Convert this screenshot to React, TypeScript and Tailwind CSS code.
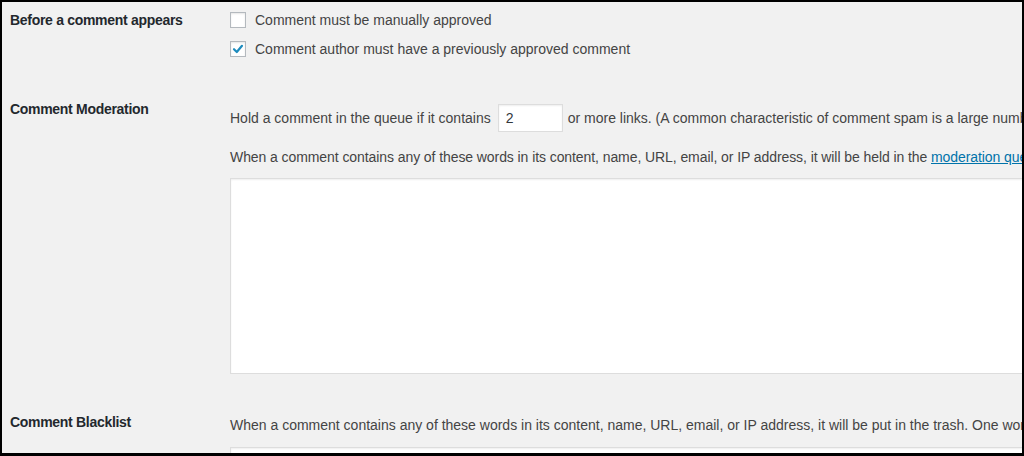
import React from "react";

const font = { fontFamily: '"Liberation Sans", Arial, sans-serif' };

function Checkbox({ checked }: { checked?: boolean }) {
  return (
    <span className="inline-flex h-[16px] w-[16px] shrink-0 items-center justify-center border border-[#b4b9be] bg-white shadow-[inset_0_1px_2px_rgba(0,0,0,0.1)]">
      {checked && (
        <svg width="14" height="14" viewBox="0 0 14 14">
          <path d="M3 7.2 L5.8 10 L11 3.8" fill="none" stroke="#1e8cbe" strokeWidth="2.2" strokeLinecap="round" strokeLinejoin="round" />
        </svg>
      )}
    </span>
  );
}

export default function App() {
  return (
    <div className="h-[456px] w-[1024px] bg-black pl-[2px] pr-[2px] pt-[2px] pb-[3px]" style={font}>
      <div className="h-full w-full overflow-hidden bg-[#f1f1f1] text-[14px] leading-[20px] whitespace-nowrap">
        {/* Row 1 */}
        <div className="flex">
          <div className="w-[228px] shrink-0 pl-[8px] pt-[8px] font-bold tracking-[-0.3px] text-[#23282d]">Before a comment appears</div>
          <div className="flex flex-col pt-[8px] text-[#444]">
            <label className="flex h-[20px] items-center gap-[9px]">
              <Checkbox />
              <span>Comment must be manually approved</span>
            </label>
            <label className="mt-[9px] flex h-[20px] items-center gap-[9px]">
              <Checkbox checked />
              <span>Comment author must have a previously approved comment</span>
            </label>
          </div>
        </div>
        {/* Row 2 */}
        <div className="flex">
          <div className="w-[228px] shrink-0 pl-[8px] pt-[40px] font-bold tracking-[-0.3px] text-[#23282d]">Comment Moderation</div>
          <div className="flex flex-col text-[#444]">
            <div className="mt-[45px] flex h-[28px] items-center">
              <span>Hold a comment in the queue if it contains</span>
              <span className="ml-[7px] mr-[5px] flex h-[28px] w-[65px] items-center border border-[#ddd] bg-white px-[7px] text-[#32373c] shadow-[inset_0_1px_2px_rgba(0,0,0,0.07)]">2</span>
              <span>or more links. (A common characteristic of comment spam is a large number of hyperlinks.)</span>
            </div>
            <div className="mt-[15px] h-[20px] tracking-[-0.08px]">
              When a comment contains any of these words in its content, name, URL, email, or IP address, it will be held in the{" "}
              <span className="text-[#0073aa] underline">moderation queue</span>. One word or IP address per line.
            </div>
            <div className="mt-[11px] h-[196px] w-[820px] border border-[#ddd] bg-white shadow-[inset_0_1px_2px_rgba(0,0,0,0.07)]" />
          </div>
        </div>
        {/* Row 3 */}
        <div className="flex">
          <div className="w-[228px] shrink-0 pl-[8px] pt-[38px] font-bold tracking-[-0.3px] text-[#23282d]">Comment Blacklist</div>
          <div className="flex flex-col text-[#444]">
            <div className="mt-[41px] h-[20px]">
              When a comment contains any of these words in its content, name, URL, email, or IP address, it will be put in the trash. One word or IP address per line.
            </div>
            <div className="mt-[12px] h-[196px] w-[820px] border border-[#ddd] bg-white shadow-[inset_0_1px_2px_rgba(0,0,0,0.07)]" />
          </div>
        </div>
      </div>
    </div>
  );
}
